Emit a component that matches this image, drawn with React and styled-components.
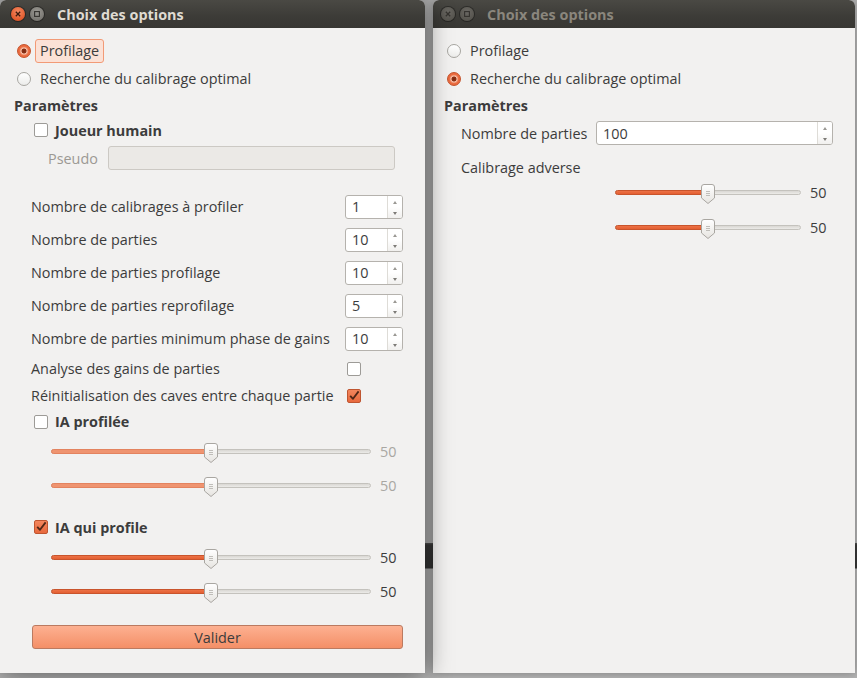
import { Fragment } from "react"
import styled, { createGlobalStyle } from "styled-components"

const GlobalStyle = createGlobalStyle`
html, body {
  margin: 0;
  padding: 0;
}
body {
  font-family: "Open Sans", "Liberation Sans", sans-serif;
  font-size: 14.4px;
  color: #3c3c3c;
}
`

const Desktop = styled.div`
display: flex;
gap: 8px;
width: 857px;
height: 678px;
overflow: hidden;
background: linear-gradient(to bottom, #b3b3b3 0, #b3b3b3 543px, #555 543px, #3a3a3a 545px, #353535 568px, #b3b3b3 569px);
`

const Window = styled.section`
position: relative;
z-index: ${props => props.$active ? 2 : 1};
flex: none;
width: ${props => props.$width}px;
height: 673px;
background: #f2f1f0;
border-radius: 6px 6px 0 0;
overflow: hidden;
display: flex;
flex-direction: column;
box-shadow: ${props => props.$active ? '0 0 26px rgba(0, 0, 0, 0.55)' : '0 0 10px rgba(0, 0, 0, 0.3)'};
`

const TitleBar = styled.header`
flex: none;
height: 28px;
display: flex;
align-items: center;
gap: 5px;
padding-left: ${props => props.$left}px;
background: linear-gradient(to bottom, #4a4944, #3c3b37 60%, #383733);
`

const WinButton = styled.span`
width: 14px;
height: 14px;
border-radius: 50%;
display: flex;
align-items: center;
justify-content: center;
background: ${props => props.$kind === 'close'
  ? 'radial-gradient(circle at 50% 35%, #f58a63, #e25a2c 70%, #c2461f)'
  : props.$active
    ? 'radial-gradient(circle at 50% 35%, #9a9892, #7a7873 70%, #5f5d58)'
    : 'radial-gradient(circle at 50% 35%, #6a6863, #57554f 70%, #4a4843)'};
box-shadow: 0 0 0 1px rgba(0, 0, 0, 0.35);
`

const Title = styled.h1`
margin: 0 0 0 ${props => props.$gap}px;
font-size: 14.4px;
font-weight: 700;
color: ${props => props.$active ? '#dfdbd2' : '#8a867d'};
`

const Body = styled.div`
padding: 9px 22px 0 ${props => props.$left}px;
display: flex;
flex-direction: column;
`

const RadioRow = styled.label`
height: 28px;
display: flex;
align-items: center;
padding-left: 3px;
gap: 4px;
`

const RadioMark = styled.span`
width: 14px;
height: 14px;
box-sizing: border-box;
border-radius: 50%;
border: 1px solid ${props => props.$on ? '#c4532b' : '#a8a6a1'};
background: ${props => props.$on
  ? 'radial-gradient(circle, #7b2a12 0, #8d3215 2.2px, #f7c3ae 2.8px, #f19774 3.8px, #ec6d41 4.6px, #e86236 100%)'
  : 'linear-gradient(to bottom, #ffffff, #ececea)'};
`

const RadioText = styled.span`
padding: 1px 4px 2px;
border-radius: 3px;
border: 1px solid ${props => props.$focus ? '#f29a76' : 'transparent'};
background: ${props => props.$focus ? '#fbe1d6' : 'transparent'};
`

const SectionTitle = styled.h2`
margin: 0;
height: 25px;
display: flex;
align-items: center;
font-size: 14.4px;
font-weight: 700;
`

const CheckRow = styled.label`
height: ${props => props.$h || 24}px;
margin-top: ${props => props.$top || 0}px;
display: flex;
align-items: center;
gap: 7px;
padding-left: 20px;
font-weight: 700;
`

const Box = styled.span`
flex: none;
width: 14px;
height: 14px;
box-sizing: border-box;
border-radius: 2px;
border: 1px solid ${props => props.$on ? '#bf5530' : '#9d9b97'};
background: ${props => props.$on ? 'linear-gradient(to bottom, #f3865d, #e8693d)' : '#ffffff'};
display: flex;
align-items: center;
justify-content: center;
margin-left: ${props => props.$shift || 0}px;
`

const PseudoRow = styled.div`
height: 32px;
display: flex;
align-items: center;
gap: 10px;
padding-left: 34px;
color: #9c9994;
`

const PseudoInput = styled.div`
flex: 1;
height: 24px;
margin-right: 8px;
box-sizing: border-box;
border: 1px solid #ccc9c4;
border-radius: 3px;
background: #ebe9e6;
`

const Grid = styled.div`
display: grid;
grid-template-columns: 1fr ${props => props.$col}px;
grid-auto-rows: ${props => props.$row}px;
align-items: center;
padding-left: 17px;
margin-top: ${props => props.$top || 0}px;
`

const Spin = styled.div`
height: 24px;
box-sizing: border-box;
border: 1px solid #b5b2ad;
border-radius: 3px;
background: #ffffff;
display: flex;
overflow: hidden;
`

const SpinValue = styled.span`
flex: 1;
padding-left: 6px;
display: flex;
align-items: center;
`

const Stepper = styled.span`
width: 14px;
border-left: 1px solid #dedcd7;
display: flex;
flex-direction: column;
justify-content: space-between;
align-items: center;
padding: 5px 0 3px;
background: linear-gradient(to bottom, #ffffff 50%, #f1f0ee);
`

const Arrow = styled.span`
width: 0;
height: 0;
border-left: 2.5px solid transparent;
border-right: 2.5px solid transparent;
${props => props.$up
  ? 'border-bottom: 3px solid #9a9893;'
  : 'border-top: 3px solid #7d7b77;'}
`

const GridLabel = styled.span`
white-space: nowrap;
`

const SliderRow = styled.div`
height: ${props => props.$h || 34}px;
display: flex;
align-items: center;
gap: 9px;
padding-left: ${props => props.$indent}px;
`

const Track = styled.div`
position: relative;
flex: 1;
height: 5px;
box-sizing: border-box;
border: 1px solid #c4c2bd;
border-radius: 3px;
background: linear-gradient(to bottom, #d9d7d3, #ecebe8);
`

const Fill = styled.div`
height: 5px;
margin: -1px 0 0 -1px;
box-sizing: border-box;
border: 1px solid ${props => props.$off ? '#e3835f' : '#c9542c'};
border-radius: 3px;
background: ${props => props.$off ? '#ef9470' : 'linear-gradient(to bottom, #ec7246, #e45f32)'};
`

const Thumb = styled.svg`
position: absolute;
top: -7px;
margin-left: -7px;
`

const SliderValue = styled.span`
width: 23px;
color: ${props => props.$off ? '#a9a7a2' : '#3c3c3c'};
`

const Button = styled.button`
margin-top: 17px;
margin-left: 18px;
height: 24px;
box-sizing: border-box;
border: 1px solid #bb7a60;
border-radius: 3px;
background: linear-gradient(to bottom, #fdb091, #f48f67);
font-family: inherit;
font-size: 14.4px;
color: #3c3c3c;
`

function WindowButtons({ active }) {
  return (
    <>
      <WinButton $kind={active ? 'close' : 'min'} $active={active}>
        <svg width="6" height="6" viewBox="0 0 6 6">
          <path d="M0.8 0.8 L5.2 5.2 M5.2 0.8 L0.8 5.2" stroke={active ? '#3b1a0e' : '#35332f'} strokeWidth="1.3" />
        </svg>
      </WinButton>
      <WinButton $active={active}>
        <svg width="6" height="6" viewBox="0 0 6 6">
          <rect x="0.6" y="0.6" width="4.8" height="4.8" fill="none" stroke="#34322e" strokeWidth="1.1" />
        </svg>
      </WinButton>
    </>
  )
}

function Radio({ on, focus, children }) {
  return (
    <RadioRow>
      <RadioMark $on={on} />
      <RadioText $focus={focus}>{children}</RadioText>
    </RadioRow>
  )
}

function Check({ on, shift }) {
  return (
    <Box $on={on} $shift={shift}>
      {on && (
        <svg width="12" height="12" viewBox="0 0 12 12">
          <path d="M2.2 5.8 L5 8.8 L10.6 1.4" fill="none" stroke="#4f2616" strokeWidth="1.8" strokeLinejoin="round" />
        </svg>
      )}
    </Box>
  )
}

function SpinBox({ value }) {
  return (
    <Spin>
      <SpinValue>{value}</SpinValue>
      <Stepper>
        <Arrow $up />
        <Arrow />
      </Stepper>
    </Spin>
  )
}

function Slider({ value, indent, off, h }) {
  const pct = value + '%'
  return (
    <SliderRow $indent={indent} $h={h}>
      <Track>
        <Fill $off={off} style={{ width: `calc(${pct} + 1px)` }} />
        <Thumb width="14" height="20" viewBox="0 0 14 20" style={{ left: pct }}>
          <defs>
            <linearGradient id="thumbGrad" x1="0" y1="0" x2="0" y2="1">
              <stop offset="0" stopColor="#ffffff" />
              <stop offset="1" stopColor="#e6e4e0" />
            </linearGradient>
          </defs>
          <path d="M3 0.5 H11 Q13.5 0.5 13.5 3 V14 L7 19.5 L0.5 14 V3 Q0.5 0.5 3 0.5 Z" fill="url(#thumbGrad)" stroke="#a9a6a1" />
          <path d="M5 7.5 H9 M5 9.5 H9 M5 11.5 H9" stroke="#b3b0ab" strokeWidth="0.8" />
        </Thumb>
      </Track>
      <SliderValue $off={off}>{value}</SliderValue>
    </SliderRow>
  )
}

const spins = [
  ['Nombre de calibrages à profiler', 1],
  ['Nombre de parties', 10],
  ['Nombre de parties profilage', 10],
  ['Nombre de parties reprofilage', 5],
  ['Nombre de parties minimum phase de gains', 10],
]

function ProfilageWindow() {
  return (
    <Window $width={425} $active>
      <TitleBar $left={11}>
        <WindowButtons active />
        <Title $gap={8} $active>Choix des options</Title>
      </TitleBar>
      <Body $left={14}>
        <Radio on focus>Profilage</Radio>
        <Radio>Recherche du calibrage optimal</Radio>
        <SectionTitle>Paramètres</SectionTitle>
        <CheckRow>
          <Check />
          Joueur humain
        </CheckRow>
        <PseudoRow>
          Pseudo
          <PseudoInput />
        </PseudoRow>
        <Grid $col={58} $row={33} $top={16}>
          {spins.map(([label, value]) => (
            <Fragment key={label}>
              <GridLabel>{label}</GridLabel>
              <SpinBox value={value} />
            </Fragment>
          ))}
        </Grid>
        <Grid $col={58} $row={27}>
          <GridLabel>Analyse des gains de parties</GridLabel>
          <Check shift={2} />
          <GridLabel>Réinitialisation des caves entre chaque partie</GridLabel>
          <Check on shift={2} />
        </Grid>
        <CheckRow $h={25}>
          <Check />
          IA profilée
        </CheckRow>
        <Slider value={50} indent={37} off />
        <Slider value={50} indent={37} off />
        <CheckRow $h={26} $top={12}>
          <Check on />
          IA qui profile
        </CheckRow>
        <Slider value={50} indent={37} />
        <Slider value={50} indent={37} />
        <Button>Valider</Button>
      </Body>
    </Window>
  )
}

function CalibrageWindow() {
  return (
    <Window $width={422}>
      <TitleBar $left={8}>
        <WindowButtons />
        <Title $gap={8}>Choix des options</Title>
      </TitleBar>
      <Body $left={11}>
        <Radio>Profilage</Radio>
        <Radio on>Recherche du calibrage optimal</Radio>
        <SectionTitle>Paramètres</SectionTitle>
        <Grid $col={237} $row={30}>
          <GridLabel>Nombre de parties</GridLabel>
          <SpinBox value={100} />
        </Grid>
        <Grid $col={237} $row={20} $top={9}>
          <GridLabel>Calibrage adverse</GridLabel>
        </Grid>
        <Slider value={50} indent={171} h={30} />
        <Slider value={50} indent={171} h={40} />
      </Body>
    </Window>
  )
}

export default function App() {
  return (
    <>
      <GlobalStyle />
      <Desktop>
        <ProfilageWindow />
        <CalibrageWindow />
      </Desktop>
    </>
  )
}
